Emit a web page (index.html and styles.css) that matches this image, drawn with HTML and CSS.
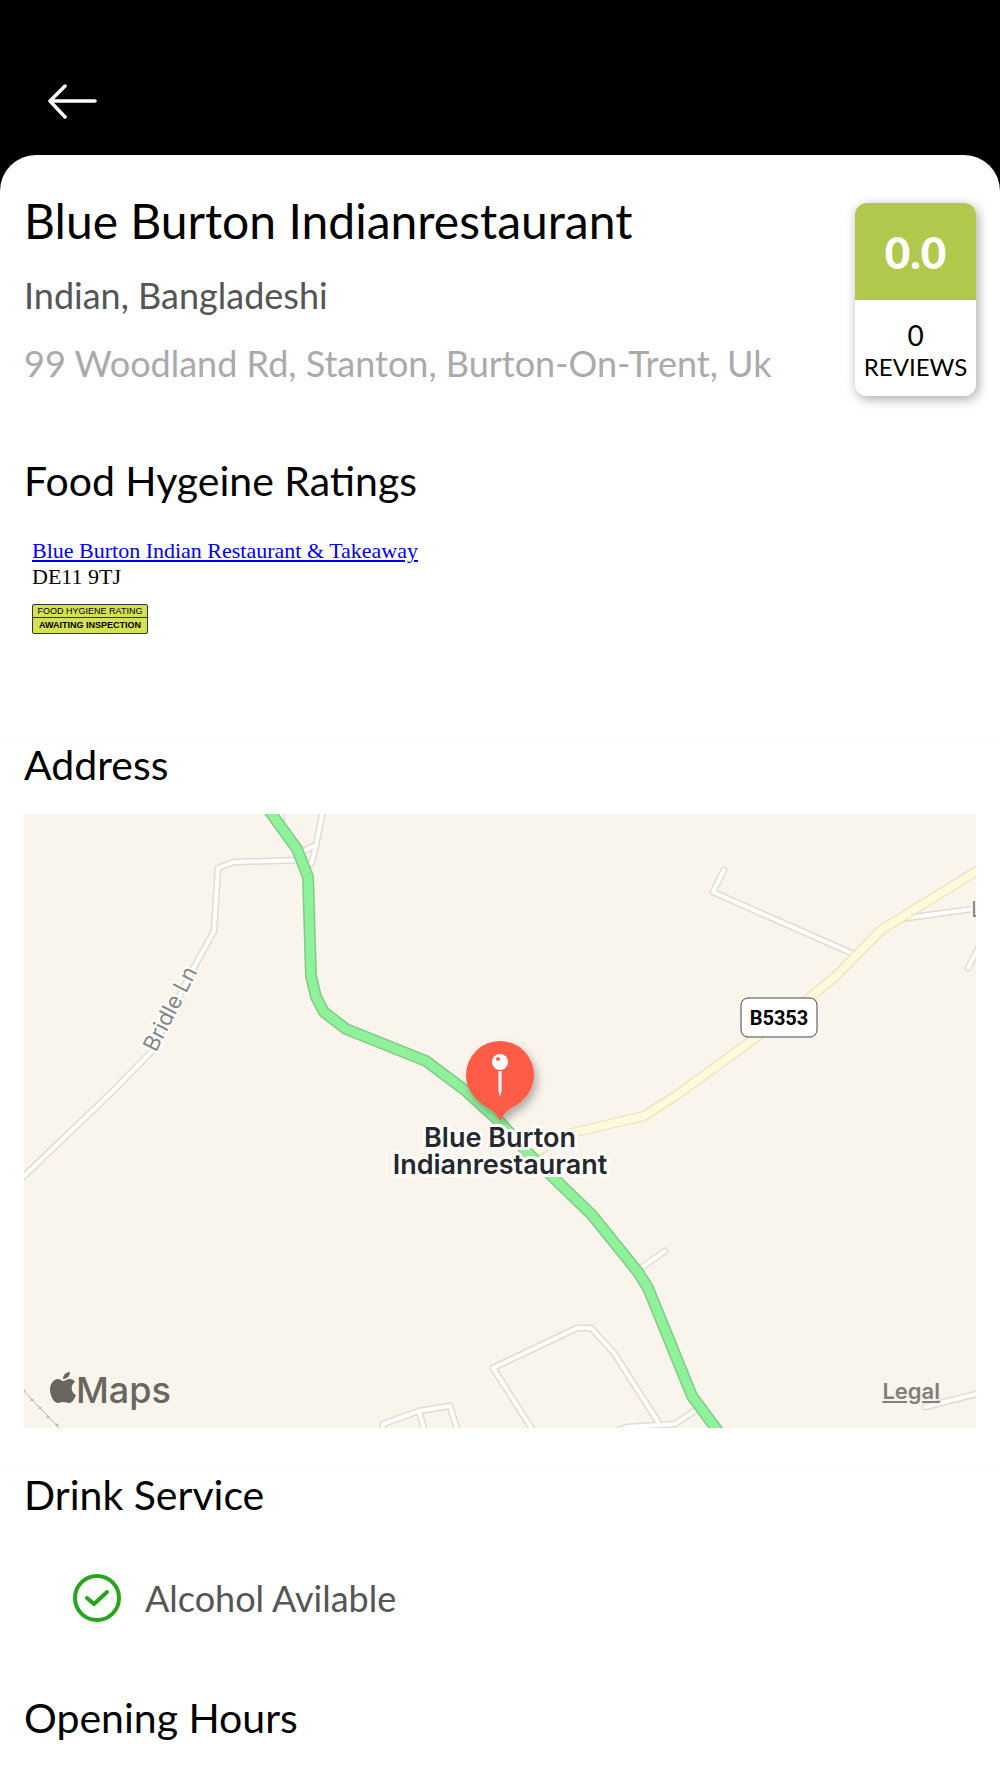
FILE: index.html
```html
<!DOCTYPE html>
<html lang="en">
<head>
    <meta charset="UTF-8">
    <meta name="viewport" content="width=device-width, initial-scale=1.0">
    <title>Blue Burton Indianrestaurant</title>
    <link rel="stylesheet" href="styles.css">
</head>
<body>
    <header class="topbar">
        <button type="button" class="back-btn" aria-label="Back">
            <svg width="50" height="36" viewBox="0 0 50 36">
                <path d="M17 2 L2 17 L17 33 M2 17 H47" fill="none" stroke="#fff" stroke-width="3.5" stroke-linecap="round" stroke-linejoin="round"/>
            </svg>
        </button>
    </header>

    <main class="sheet">
        <div class="intro">
            <div class="intro-text">
                <h1>Blue Burton Indianrestaurant</h1>
                <p class="cuisine">Indian, Bangladeshi</p>
                <p class="address">99 Woodland Rd, Stanton, Burton-On-Trent, Uk</p>
            </div>
            <div class="rating">
                <div class="score">0.0</div>
                <div class="reviews">
                    <span class="count">0</span>
                    <span>REVIEWS</span>
                </div>
            </div>
        </div>

        <section class="hygiene">
            <h2>Food Hygeine Ratings</h2>
            <div class="hygiene-info">
                <a href="#">Blue Burton Indian Restaurant &amp; Takeaway</a>
                <p>DE11 9TJ</p>
                <div class="hygiene-badge">
                    <span>FOOD HYGIENE RATING</span>
                    <strong>AWAITING INSPECTION</strong>
                </div>
            </div>
        </section>

        <section class="section location">
            <h2>Address</h2>
            <div class="map">
                <svg class="map-canvas" viewBox="0 0 952 614">
                    <defs>
                        <filter id="pinShadow" x="-50%" y="-50%" width="200%" height="200%">
                            <feDropShadow dx="3" dy="5" stdDeviation="4" flood-color="#000" flood-opacity="0.3"/>
                        </filter>
                        <g id="lanes">
                            <path d="M299 -4 L292 31 L288 48 L280 55"/>
                            <path d="M292 31 L275 39"/>
                            <path d="M256 -4 L258 10"/>
                            <path d="M276 46 L210 48 L194 54 L190 117 L168 157 L128 237 L89 277 L-4 366"/>
                            <path d="M700 56 L689 78 L832 141"/>
                            <path d="M876 105 L956 94"/>
                            <path d="M956 131 L944 154"/>
                            <path d="M641 437 L614 456"/>
                            <path d="M510 618 L469 554 L553 514 L567 514 L590 539 L636 611"/>
                            <path d="M590 618 L603 613 L651 610 L675 594"/>
                            <path d="M901 593 L956 579"/>
                            <path d="M359 618 V610 L395 597 L426 592 L434 618"/>
                            <path d="M395 597 L401 618"/>
                        </g>
                        <path id="broad" d="M510 340 L539 321 L620 302 L653 281 L723 230 L778 190 L813 161 L857 116 L956 55"/>
                        <path id="main" d="M244 -5 L273 35 L284 63 L287 162 L292 183 L300 198 L322 215 L402 247 L442 277 L476 308 L503 338 L568 401 L614 458 L624 474 L668 582 L696 620"/>
                    </defs>

                    <rect class="land" width="952" height="614"/>
                    <use href="#lanes" class="road lane-edge"/>
                    <use href="#lanes" class="road lane"/>
                    <use href="#broad" class="road broad-edge"/>
                    <use href="#broad" class="road broad"/>
                    <use href="#main" class="road main-edge"/>
                    <use href="#main" class="road main"/>

                    <!-- railway -->
                    <g class="rail">
                        <path d="M0 577 L36 615"/>
                        <circle cx="0" cy="577" r="1"/>
                        <circle cx="8" cy="586" r="1"/>
                        <circle cx="16" cy="594" r="1"/>
                        <circle cx="24" cy="603" r="1"/>
                        <circle cx="33" cy="611" r="1"/>
                    </g>

                    <text class="lane-name" transform="translate(132 239) rotate(-63)">Bridle Ln</text>
                    <text class="lane-name" x="947" y="103">L</text>

                    <rect class="shield" x="717" y="184" width="76" height="39" rx="7"/>
                    <text class="shield-text" x="755" y="211">B5353</text>

                    <!-- pin -->
                    <g filter="url(#pinShadow)">
                        <path fill="#ff5c47" d="M476 227 a34 34 0 0 1 34 34 c0 14 -9 27 -24 34 q-5 3 -10 12 q-5 -9 -10 -12 c-15 -7 -24 -20 -24 -34 a34 34 0 0 1 34 -34 z"/>
                    </g>
                    <circle cx="476" cy="248" r="8" fill="#fff"/>
                    <circle cx="474" cy="245" r="2" fill="#ff5c47"/>
                    <path fill="#fff" d="M474.500 257 h3 v20 l-1.500 6 l-1.500 -6 z"/>
                    <text class="place" x="476" y="333">Blue Burton</text>
                    <text class="place" x="476" y="360">Indianrestaurant</text>

                    <!-- brand -->
                    <g class="brand">
                        <path d="M39 567 c2 0 4 -2 7 -2 c2 0 4 1 5 3 c-5 3 -4 11 1 13 c-2 5 -4 8 -7 8 c-2 0 -3 -1 -6 -1 c-2 0 -4 1 -5 1 c-5 0 -8 -9 -8 -13 c0 -7 4 -11 8 -11 c2 0 4 2 5 2 z"/>
                        <path d="M39 565 c0 -4 3 -7 7 -7 c0 4 -3 7 -7 7 z"/>
                        <text x="52" y="589">Maps</text>
                    </g>
                </svg>
                <a href="#" class="legal">Legal</a>
            </div>
        </section>

        <section class="section drinks">
            <h2>Drink Service</h2>
            <div class="service">
                <svg width="48" height="48" viewBox="0 0 48 48">
                    <g fill="none" stroke="#27a51c" stroke-linecap="round" stroke-linejoin="round">
                        <circle cx="24" cy="24" r="22" stroke-width="4"/>
                        <path d="M14 24 L21 30 L34 18" stroke-width="4"/>
                    </g>
                </svg>
                <span>Alcohol Avilable</span>
            </div>
        </section>

        <section class="section hours">
            <h2>Opening Hours</h2>
        </section>
    </main>
</body>
</html>
```
FILE: styles.css
```css
* {
    margin: 0;
    padding: 0;
    box-sizing: border-box;
}

body {
    font-family: Lato, 'Open Sans', sans-serif;
    background: #000;
    color: #000;
}

.topbar {
    padding: 84px 48px 35px;
}

.back-btn {
    display: block;
    background: none;
    border: none;
    cursor: pointer;
}

.back-btn svg {
    display: block;
}

.sheet {
    background: #fff;
    border-radius: 36px 36px 0 0;
    min-height: calc(100vh - 155px);
}

h1 {
    font-size: 48px;
    line-height: 58px;
    font-weight: 400;
}

h2 {
    font-size: 41px;
    line-height: 48px;
    font-weight: 400;
}

.intro {
    display: flex;
    justify-content: space-between;
    align-items: flex-start;
    gap: 24px;
    padding: 37px 24px 0;
}

.intro-text p {
    font-size: 36px;
    line-height: 44px;
}

.cuisine {
    margin-top: 23px;
    color: #555;
}

.address {
    margin-top: 24px;
    color: #aaa;
}

.rating {
    flex: none;
    width: 121px;
    margin-top: 11px;
    border-radius: 12px;
    overflow: hidden;
    box-shadow: 2px 3px 12px rgba(0, 0, 0, 0.35);
}

.score {
    height: 97px;
    background: #b0c94d;
    color: #fff;
    font-size: 44px;
    line-height: 98px;
    font-weight: 900;
    text-align: center;
}

.reviews {
    display: flex;
    flex-direction: column;
    align-items: center;
    height: 96px;
    padding-top: 19px;
    background: #fff;
    font-size: 24px;
    line-height: 32px;
}

.reviews .count {
    font-size: 28px;
}

.hygiene {
    padding: 61px 24px 103px;
}

.hygiene-info {
    padding: 33px 8px 0;
    font-family: 'Liberation Serif', 'Times New Roman', serif;
    font-size: 22px;
    line-height: 26px;
}

.hygiene-info a {
    color: #00e;
}

.hygiene-badge {
    display: flex;
    flex-direction: column;
    width: 116px;
    margin-top: 14px;
    border: 1px solid #333;
    border-radius: 2px;
    background: #d5e154;
    font-family: 'Liberation Sans', Arial, sans-serif;
    font-size: 9px;
    text-align: center;
    white-space: nowrap;
}

.hygiene-badge span {
    line-height: 12px;
    border-bottom: 1px solid #333;
}

.hygiene-badge strong {
    line-height: 15px;
}

.section {
    padding: 0 24px;
    border-top: 4px solid #fffdf9;
}

.map {
    position: relative;
    margin-top: 25px;
}

.location {
    padding-bottom: 39px;
}

.map-canvas {
    display: block;
    width: 100%;
    font-family: Inter, 'Liberation Sans', sans-serif;
}

.land {
    fill: #f9f4ec;
}

.road {
    fill: none;
    stroke-linecap: round;
    stroke-linejoin: round;
}

.lane-edge {
    stroke: #e2dbd0;
    stroke-width: 7px;
}

.lane {
    stroke: #fff;
    stroke-width: 4px;
}

.broad-edge {
    stroke: #f7d6ae;
    stroke-width: 10px;
}

.broad {
    stroke: #fdfadb;
    stroke-width: 8px;
}

.main-edge {
    stroke: #83c988;
    stroke-width: 12px;
}

.main {
    stroke: #8ef29b;
    stroke-width: 9px;
}

.rail {
    fill: #b9b6b2;
    stroke: #b9b6b2;
    stroke-width: 1px;
}

.lane-name {
    fill: #858585;
    stroke: #fff;
    stroke-width: 4px;
    paint-order: stroke;
    font-size: 22px;
}

.shield {
    fill: #fff;
    stroke: #444;
    stroke-width: 1px;
}

.shield-text {
    font-family: 'Liberation Sans Narrow', Roboto, sans-serif;
    font-size: 20px;
    font-weight: 700;
    text-anchor: middle;
}

.place {
    fill: #26282b;
    stroke: #fff;
    stroke-width: 6px;
    stroke-linejoin: round;
    paint-order: stroke;
    font-size: 27px;
    font-weight: 600;
    text-anchor: middle;
}

.brand {
    fill: #67665f;
    font-size: 36px;
    font-weight: 500;
}

.legal {
    position: absolute;
    right: 36px;
    bottom: 23px;
    color: #807f7b;
    font-family: Inter, 'Liberation Sans', sans-serif;
    font-size: 22px;
    line-height: 28px;
    font-weight: 600;
}

.drinks {
    padding-bottom: 68px;
}

.service {
    display: flex;
    align-items: center;
    gap: 24px;
    padding: 55px 49px 0;
    color: #555;
    font-size: 36px;
    line-height: 48px;
}

.hours {
    border-top-color: #fff;
}
```
